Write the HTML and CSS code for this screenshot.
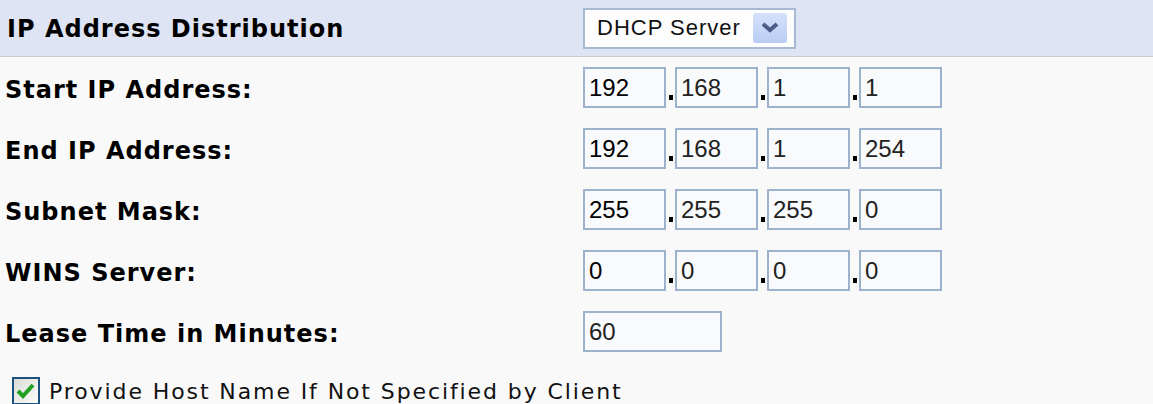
FILE: index.html
```html
<!DOCTYPE html>
<html lang="en">
<head>
  <meta charset="UTF-8">
  <meta name="viewport" content="width=device-width, initial-scale=1.0">
  <title>DHCP Settings</title>
  <link rel="stylesheet" href="styles.css">
</head>
<body>

  <div class="row head-row">
    <div class="label head-label">IP Address Distribution</div>
    <div class="controls">
      <div class="select-box">
        <span class="select-text">DHCP Server</span>
        <span class="select-btn">
          <svg width="18" height="12" viewBox="0 0 18 12">
            <path d="M2 2 L9 8 L16 2" fill="none" stroke="#4a5d86" stroke-width="4" stroke-linejoin="miter"/>
          </svg>
        </span>
      </div>
    </div>
  </div>

  <div class="row">
    <div class="label">Start IP Address:</div>
    <div class="controls ip">
      <input class="ip-part first" type="text" value="192"><span class="sep"></span>
      <input class="ip-part" type="text" value="168"><span class="sep"></span>
      <input class="ip-part" type="text" value="1"><span class="sep"></span>
      <input class="ip-part" type="text" value="1">
    </div>
  </div>

  <div class="row">
    <div class="label">End IP Address:</div>
    <div class="controls ip">
      <input class="ip-part first" type="text" value="192"><span class="sep"></span>
      <input class="ip-part" type="text" value="168"><span class="sep"></span>
      <input class="ip-part" type="text" value="1"><span class="sep"></span>
      <input class="ip-part" type="text" value="254">
    </div>
  </div>

  <div class="row">
    <div class="label">Subnet Mask:</div>
    <div class="controls ip">
      <input class="ip-part first" type="text" value="255"><span class="sep"></span>
      <input class="ip-part" type="text" value="255"><span class="sep"></span>
      <input class="ip-part" type="text" value="255"><span class="sep"></span>
      <input class="ip-part" type="text" value="0">
    </div>
  </div>

  <div class="row">
    <div class="label">WINS Server:</div>
    <div class="controls ip">
      <input class="ip-part first" type="text" value="0"><span class="sep"></span>
      <input class="ip-part" type="text" value="0"><span class="sep"></span>
      <input class="ip-part" type="text" value="0"><span class="sep"></span>
      <input class="ip-part" type="text" value="0">
    </div>
  </div>

  <div class="row">
    <div class="label">Lease Time in Minutes:</div>
    <div class="controls">
      <input class="lease" type="text" value="60">
    </div>
  </div>

  <div class="check-row">
    <span class="checkbox">
      <svg width="20" height="18" viewBox="0 0 20 18">
        <path d="M2 9 L7 14 L17 3" fill="none" stroke="#22a022" stroke-width="4"/>
      </svg>
    </span>
    <span class="check-text">Provide Host Name If Not Specified by Client</span>
  </div>

</body>
</html>
```

FILE: styles.css
```css
body {
  margin: 0;
  background: #f9f9f9;
  color: #000;
  font-family: "DejaVu Sans", Verdana, sans-serif;
}
.row {
  display: flex;
  align-items: center;
  height: 61px;
}
.head-row {
  height: 56px;
  background: #dfe4f4;
  border-bottom: 1px solid #c8cbd3;
}
.label {
  width: 578px;
  padding-left: 5px;
  padding-top: 5px;
  font-weight: bold;
  font-size: 24px;
  letter-spacing: 1px;
}
.head-label {
  padding-left: 7px;
  padding-top: 2px;
  width: 576px;
}
.controls {
  display: flex;
  align-items: center;
}
.select-box {
  display: flex;
  align-items: center;
  justify-content: space-between;
  box-sizing: border-box;
  width: 213px;
  height: 41px;
  background: #fdfdfe;
  border: 2px solid #a7b9d3;
  padding: 0 7px 0 12px;
}
.select-text {
  font-family: "Liberation Sans", Arial, sans-serif;
  font-size: 22px;
  letter-spacing: 1px;
  color: #111;
}
.select-btn {
  display: flex;
  align-items: center;
  justify-content: center;
  width: 34px;
  height: 30px;
  border-radius: 3px;
  background: linear-gradient(to bottom, #d5e1fb, #b9cdf4);
}
.ip-part, .lease {
  box-sizing: border-box;
  width: 83px;
  height: 41px;
  margin: 0;
  padding: 0 4px;
  border: 2px solid #9db2cd;
  background: #f8fafc;
  font-family: "Liberation Sans", Arial, sans-serif;
  font-size: 24px;
  color: #222;
  outline: none;
}
.ip-part.first {
  color: #000;
}
.lease {
  width: 139px;
}
.sep {
  display: flex;
  align-items: flex-end;
  justify-content: center;
  width: 9px;
  height: 41px;
}
.sep::before {
  content: "";
  width: 4px;
  height: 5px;
  margin-bottom: 8px;
  background: #000;
}
.check-row {
  display: flex;
  align-items: center;
  gap: 9px;
  margin-top: 15px;
  padding-left: 12px;
}
.checkbox {
  display: flex;
  align-items: center;
  justify-content: center;
  box-sizing: border-box;
  width: 28px;
  height: 28px;
  border: 2px solid #1d5180;
  background: linear-gradient(135deg, #dcdcd6, #fbfbfa);
}
.check-text {
  font-size: 22px;
  letter-spacing: 1.9px;
  color: #111;
}
```
